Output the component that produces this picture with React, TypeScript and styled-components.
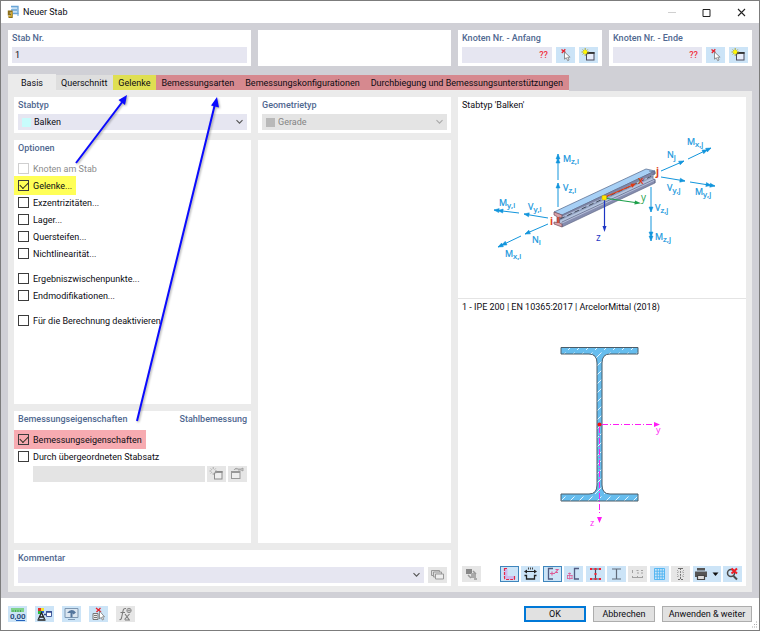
import React from "react";
import styled, { createGlobalStyle, css } from "styled-components";

const GlobalStyle = createGlobalStyle`
  * { box-sizing: border-box; }
  body { margin: 0; background: #fff; }
  body, button, input, select {
    font-family: Roboto, "Open Sans", sans-serif;
    font-size: 9px;
    line-height: 12px;
    font-weight: 400;
    color: #0c0c12;
  }
`;

const Window = styled.div`
  position: relative;
  display: flex;
  flex-direction: column;
  min-height: 100vh;
  border: 1px solid #7c7c7c;
  background: #fff;
`;

const TitleBar = styled.header`
  display: flex;
  align-items: center;
  height: 22px;
  padding-left: 6px;
`;

const Title = styled.h1`
  flex: 1;
  margin: 0 0 0 3px;
  font-size: 9px;
  font-weight: 400;
`;

const CaptionButton = styled.button`
  display: grid;
  place-items: center;
  width: 35px;
  height: 22px;
  padding: 0;
  border: 0;
  background: none;
`;

const Body = styled.main`
  flex: 1;
  display: flex;
  flex-direction: column;
  padding: 7px 7px 6px;
  background: #d0d0d6;
`;

const Panel = styled.section<{ $area?: string }>`
  padding: 2px 4px 3px;
  background: #fff;
  ${(p) => p.$area && css`grid-area: ${p.$area};`}
`;

const HeaderGrid = styled.div`
  display: grid;
  grid-template-columns: 243fr 193fr 144fr 143fr;
  gap: 7px;
  min-height: 36px;
`;

const captionStyle = css`
  display: block;
  height: 15px;
  margin: 0;
  font-size: 9px;
  font-weight: 500;
  color: #506890;
`;

const Caption = styled.label`${captionStyle}`;

const GroupTitle = styled.h2`${captionStyle}`;

const CaptionRow = styled.div`
  display: flex;
  justify-content: space-between;
`;

const FieldRow = styled.div<{ $indent?: boolean; $tight?: boolean }>`
  display: flex;
  align-items: center;
  gap: ${(p) => (p.$tight ? "2px" : "4px")};
  padding-left: ${(p) => (p.$indent ? "15px" : "0")};
`;

const TextField = styled.input<{ $alert?: boolean }>`
  flex: 1;
  min-width: 0;
  width: 100%;
  height: 16px;
  padding: 0 3px;
  border: 0;
  background: #e6e6f1;
  ${(p) => p.$alert && css`text-align: right; color: #f0353f; font-weight: 500; padding-right: 4px;`}
  &:disabled { background: #e4e4e4; }
`;

const SelectBox = styled.span<{ $muted?: boolean }>`
  display: grid;
  flex: 1;
  grid-template-columns: 4px 9px 1fr 9px 3px;
  align-items: center;
  height: 16px;
  background: ${(p) => (p.$muted ? "#e4e4e4" : "#e6e6f1")};
  svg { grid-row: 1; grid-column: 4; pointer-events: none; }
`;

const Swatch = styled.i<{ $color: string }>`
  grid-row: 1;
  grid-column: 2;
  height: 9px;
  background: ${(p) => p.$color};
`;

const Select = styled.select`
  grid-row: 1;
  grid-column: 1 / -1;
  appearance: none;
  width: 100%;
  height: 16px;
  padding: 0 14px 0 16px;
  border: 0;
  background: none;
  &:disabled { color: #838383; opacity: 1; }
`;

const IconButton = styled.button<{ $wide?: boolean; $active?: boolean }>`
  display: grid;
  place-items: center;
  flex: none;
  width: ${(p) => (p.$wide ? "28px" : "19px")};
  height: 16px;
  padding: 0;
  border: ${(p) => (p.$active ? "1px solid #3f86bd" : "0")};
  background: #cce4f7;
  &:disabled { background: #e6e6e6; }
  svg { display: block; }
`;

const Tabs = styled.nav`
  display: flex;
  align-items: flex-end;
  margin-top: 8px;
`;

const Tab = styled.button<{ $tone: string; $tall?: boolean }>`
  height: ${(p) => (p.$tall ? "17px" : "16px")};
  padding: ${(p) => (p.$tall ? "0 13px" : "0 6px 0 5px")};
  border: 0;
  border-bottom: ${(p) => (p.$tall ? "0" : "1px solid #ececec")};
  background: ${(p) => p.$tone};
  white-space: nowrap;
`;

const Page = styled.div`
  flex: 1;
  display: grid;
  grid-template-columns: 237fr 193fr 288fr;
  grid-template-rows: auto 2fr 1fr auto;
  grid-template-areas:
    "type geometry preview"
    "options empty preview"
    "design empty preview"
    "comment comment preview";
  gap: 7px;
  padding: 6px;
  background: #ebebeb;
`;

const CheckGroup = styled.div<{ $tight?: boolean }>`
  display: flex;
  flex-direction: column;
  padding-top: 3px;
  margin-bottom: ${(p) => (p.$tight ? "1px" : "5px")};
`;

const CheckRow = styled.label<{ $mark?: string; $muted?: boolean }>`
  display: flex;
  align-items: center;
  align-self: flex-start;
  gap: 4px;
  height: 19px;
  margin: -1px 0 -1px -4px;
  padding: 0 4px;
  white-space: nowrap;
  background: ${(p) => p.$mark ?? "none"};
  color: ${(p) => (p.$muted ? "#8c8c8c" : "inherit")};
`;

const CheckBox = styled.input`
  appearance: none;
  display: grid;
  place-items: center;
  width: 11px;
  height: 11px;
  margin: 0;
  border: 1px solid #3c3c3c;
  &:disabled { border-color: #cfcfcf; }
  &:checked::after {
    content: "";
    width: 7px;
    height: 4px;
    margin-bottom: 2px;
    border: solid #2c2c1c;
    border-width: 0 0 1px 1px;
    transform: rotate(-45deg);
  }
`;

const Preview = styled.section`
  grid-area: preview;
  background: #fff;
`;

const PreviewTitle = styled.h2<{ $rule?: boolean }>`
  margin: 0;
  padding: ${(p) => (p.$rule ? "2px 4px" : "2px 4px 1px")};
  font-size: 9px;
  font-weight: 400;
  border-top: ${(p) => (p.$rule ? "1px solid #e4e4e4" : "0")};
`;

const Drawing = styled.svg`
  display: block;
  width: 100%;
  font-family: "Open Sans", "Noto Sans", sans-serif;
`;

const PreviewTools = styled.div`
  display: flex;
  padding: 4px;
`;

const ToolGroup = styled.div`
  flex: 1;
  display: flex;
  justify-content: space-between;
  margin-left: 19px;
`;

const Footer = styled.footer`
  position: relative;
  display: flex;
  align-items: center;
  gap: 8px;
  height: 32px;
  padding: 0 7px;
`;

const Actions = styled.div`
  display: flex;
  gap: 7px;
  margin-left: auto;
`;

const ActionButton = styled.button<{ $primary?: boolean; $wide?: boolean }>`
  width: ${(p) => (p.$wide ? "90px" : "62px")};
  height: 16px;
  padding: 0;
  white-space: nowrap;
  line-height: 12px;
  border: ${(p) => (p.$primary ? "2px solid #0078d7" : "1px solid #adadad")};
  background: #e1e1e1;
`;

const Grip = styled.svg`
  position: absolute;
  right: 1px;
  bottom: 1px;
`;

const Annotations = styled.svg`
  position: absolute;
  left: -1px;
  top: -1px;
  pointer-events: none;
  filter: drop-shadow(1px 1px 1px rgba(0, 0, 0, 0.35));
`;

const Chevron = ({ color = "#555" }: { color?: string }) => (
  <svg width="9" height="6" viewBox="0 0 9 6">
    <path d="M1.5 1.2 4.5 4.2 7.5 1.2" fill="none" stroke={color} strokeWidth="1.1" />
  </svg>
);

const PickIcon = () => (
  <svg width="17" height="15" viewBox="0 0 17 15">
    <path d="M4.500 1.500l4 3M8.300 1.200 4.800 5" stroke="#e8202c" strokeWidth="1.300" />
    <path d="M7.500 4v7.200l1.800-1.500 1.400 3 1.400-.7-1.400-2.800h2.400z" fill="#fff" stroke="#777" strokeWidth=".8" />
  </svg>
);

const NewIcon = ({ gray }: { gray?: boolean }) => (
  <svg width="19" height="16" viewBox="0 0 19 16">
    <rect x="7.5" y="5.5" width="7.5" height="7.5" fill={gray ? "#eee" : "#e8eefc"} stroke={gray ? "#8c8c8c" : "#4a4a5c"} />
    <path d="M7 6h8.500" stroke={gray ? "#8c8c8c" : "#333"} strokeWidth="1.8" />
    <path d="M6.200 1v8M2.500 5h7.500M3.700 2.500l5 5M8.700 2.500l-5 5" stroke={gray ? "#a2a2a2" : "#a8a21c"} strokeWidth=".9" />
    <circle cx="6.200" cy="5" r="2" fill={gray ? "#e6e6e6" : "#fff700"} />
  </svg>
);

const EditIcon = () => (
  <svg width="19" height="16" viewBox="0 0 19 16">
    <rect x="3.500" y="5.500" width="8.500" height="7" fill="#eee" stroke="#999" />
    <path d="M3 6h9" stroke="#999" strokeWidth="2" />
    <path d="M6 4c1-2 3-2 4-1h3l2-1v3l-2-1h-3" fill="#ccc" stroke="#999" strokeWidth=".8" />
  </svg>
);

const AppIcon = () => (
  <svg width="13" height="14" viewBox="0 0 13 14">
    <path d="M4 1.500h7v7H6M4 5h6" fill="#c8e2f6" stroke="#6aa5d6" strokeWidth="1.300" />
    <path d="M11 8v3" stroke="#6aa5d6" />
    <path d="M4.700 6.500H1.800v3h3zM4.700 6v6H1.500" fill="none" stroke="#8a6d18" strokeWidth="2" />
    <path d="M4.500 7v4.500H1.500" fill="none" stroke="#e6b92c" strokeWidth=".8" />
  </svg>
);

const ForceArrow = ({ x1, y1, x2, y2, twin }: { x1: number; y1: number; x2: number; y2: number; twin?: boolean }) => {
  const angle = (Math.atan2(y2 - y1, x2 - x1) * 180) / Math.PI;
  return (
    <g stroke="#1295dc" fill="#1295dc">
      <path d={`M${x1} ${y1}L${x2} ${y2}`} />
      <path d={`M0 0l-5-2v4z${twin ? "M-4 0l-5-2v4z" : ""}`} transform={`translate(${x2} ${y2}) rotate(${angle})`} strokeWidth=".5" />
    </g>
  );
};

const forces = [
  [558, 180, 558, 154, 1], [558, 207, 558, 183, 0], [548, 218, 524, 214, 0], [519, 213, 494, 210, 1],
  [548, 224, 525, 234, 0], [521, 236, 498, 247, 1], [661, 171, 684, 161, 0], [688, 159, 711, 148, 1],
  [661, 177, 685, 181, 0], [690, 182, 715, 186, 1], [651, 187, 651, 212, 0], [651, 216, 651, 241, 1],
];

const forceLabels: [string, string, number, number][] = [
  ["M", "z,i", 563, 162], ["V", "z,i", 563, 191], ["M", "y,i", 499, 206], ["V", "y,i", 528, 210],
  ["N", "i", 532, 243], ["M", "x,i", 505, 257], ["M", "x,j", 687, 145], ["N", "j", 667, 158],
  ["V", "y,j", 667, 191], ["M", "y,j", 695, 195], ["V", "z,j", 655, 211], ["M", "z,j", 655, 240],
];

const BeamDrawing = () => (
  <Drawing viewBox="458 112 288 186">
    <path d="M554 212 646 169 655 171 562 215z" fill="#a7d0f5" stroke="#5f7396" strokeWidth=".8" />
    <path d="M562 215 655 171v3L562 218z" fill="#8087a8" stroke="#58607f" strokeWidth=".5" />
    <path d="M559 218 653 175v6L559 224z" fill="#b5c5de" />
    <path d="M559 219 653 176v1.500L559 221z" fill="#8f9dbd" />
    <path d="M562 222 655 179v4L562 227z" fill="#858daf" stroke="#58607f" strokeWidth=".6" />
    <path d="M562 223 655 180" stroke="#c3cde4" strokeWidth=".8" />
    <path d="M554 212l8 3v3l-2.500-1v6l2.500 1v3l-8-3v-2l3 .5v-6l-3-1.500z" fill="#d9a1a8" stroke="#704c59" strokeWidth=".7" />
    <path d="M649 171l6 1v2l-2 0v5l2 1v3" fill="none" stroke="#66708f" strokeWidth=".8" />
    <path d="M560 219 652 176" stroke="#444c5c" strokeDasharray="5 3" />
    <path d="M558 217v6" stroke="#c83720" strokeWidth="1.500" />
    <path d="M604 197.500 633 185" stroke="#e03a12" strokeWidth="1.200" />
    <path d="M636 183.500l-5.500.2 1.700 4z" fill="#e03a12" />
    <path d="M604 198 635 202.500" stroke="#1da04a" strokeWidth="1.100" />
    <path d="M641 203.300l-6-2.800-.6 4z" fill="#1da04a" />
    <path d="M604.500 198v29" stroke="#1c35c4" strokeWidth="1.200" />
    <path d="M604.500 232l-2-6h4z" fill="#1c35c4" />
    <rect x="602" y="195.500" width="4.500" height="4.500" rx="1" fill="#ffe600" stroke="#c7a800" strokeWidth=".5" />
    {forces.map(([x1, y1, x2, y2, twin]) => (
      <ForceArrow key={`${x1}-${y1}`} x1={x1} y1={y1} x2={x2} y2={y2} twin={!!twin} />
    ))}
    {forceLabels.map(([name, sub, x, y]) => (
      <text key={`${x}-${y}`} x={x} y={y} fontSize="9" fill="#1295dc" stroke="#1295dc" strokeWidth=".2">
        {name}
        <tspan fontSize="8" dy="2">{sub}</tspan>
      </text>
    ))}
    <g fontSize="10">
      <text x="550" y="225" fill="#dd4015" fontWeight="700">i</text>
      <text x="656" y="175" fill="#dd4015" fontWeight="700">j</text>
      <text x="638" y="184" fill="#dd4015" fontWeight="600">x</text>
      <text x="641" y="201" fill="#1da04a">y</text>
      <text x="596" y="241" fill="#1c35c4">z</text>
    </g>
  </Drawing>
);

const SectionDrawing = () => (
  <Drawing viewBox="458 315 288 247">
    <defs>
      <pattern id="hatch" width="9" height="9" patternUnits="userSpaceOnUse">
        <rect width="9" height="9" fill="#66bdee" />
        <path d="M1 8 7.500 1.500" stroke="#e6f6ff" strokeWidth="1" />
      </pattern>
    </defs>
    <path
      d="M561 347.500h77v6.500h-28q-8 0-8 9v122q0 9 8 9h28v7h-77v-7h28q8 0 8-9V363q0-9-8-9h-28z"
      fill="url(#hatch)"
      stroke="#4b5c68"
    />
    <g stroke="#ff1cf5" fill="#ff1cf5">
      <path d="M602 424.500h51" strokeDasharray="6 2 1 2" />
      <path d="M599.500 427v88" strokeDasharray="6 2 1 2" />
      <path d="M660 424.500l-6-2.500v5zM599.500 523l-2.500-6h5z" stroke="none" />
    </g>
    <circle cx="599.500" cy="424.500" r="2" fill="#f51010" />
    <g fontSize="9" fill="#ff1cf5">
      <text x="656" y="433">y</text>
      <text x="590" y="526">z</text>
    </g>
  </Drawing>
);

const icon = (children: React.ReactNode, width = 17) => (
  <svg width={width} height="14" viewBox={`0 0 ${width} 14`} fill="none">{children}</svg>
);

const tools: { name: string; active?: boolean; disabled?: boolean; wide?: boolean; art: React.ReactNode }[] = [
  { name: "Querschnittskontur", active: true, art: icon(<>
    <path d="M5 1.500v7q0 2 2 2h6" stroke="#cdb9ee" strokeWidth="3" />
    <path d="M3.500 1v9.500q0 2 2 2H14M3 1.500h4M13.500 9v4" stroke="#e52a48" strokeWidth="1.200" strokeDasharray="3 1" /></>) },
  { name: "Bemaßung", art: icon(<>
    <path d="M3 4.500h11" stroke="#222" />
    <path d="M2 4.500l3-2v4zM15 4.500l-3-2v4z" fill="#222" />
    <path d="M2.500 8.500h2V12h8V8.500h2" stroke="#222" strokeWidth="1.300" />
    <path d="M6 1.500h1M8 1.500h1M10 1.500h1" stroke="#444" strokeWidth="2" /></>) },
  { name: "Hauptachsen", active: true, art: icon(<>
    <path d="M9 1.500H4.500v10.500H9" stroke="#525a80" strokeWidth="1.300" />
    <path d="M6 6.500h5M8 4.500v4M11.500 2.500h2.500l-2.500 3h2.500" stroke="#dc5b96" strokeWidth="1.100" /></>) },
  { name: "Punkte", art: icon(<>
    <path d="M14 1.500H9.500v10.500H14" stroke="#525a80" strokeWidth="1.300" />
    <path d="M3 6.500h3M2 8.500h5.500M2 11.500h5.500M2.500 8v4M7 8v4M4.700 5.500v7" stroke="#dc5b96" strokeWidth=".8" /></>) },
  { name: "Profil mit Punkten", art: icon(<>
    <path d="M3 2h11M3 12h11M8.500 2v10" stroke="#444c60" strokeWidth="1.200" />
    <path d="M3 2h2M7.500 2h2M12 2h2M3 12h2M7.500 12h2M12 12h2M7.500 7h2" stroke="#f02032" strokeWidth="1.800" /></>) },
  { name: "Profil", art: icon(<path d="M4 2h9M4 12h9M8.500 2v10" stroke="#606b7a" strokeWidth="1.200" />) },
  { name: "Nummerierung", disabled: true, art: icon(<>
    <path d="M3.500 3v3M7.500 3.500h2M8 6h2M12 3.500h2M12 6h2" stroke="#a0a0a0" />
    <path d="M3 10.500h11M3.500 9v2M8.500 9v2M13.500 9v2" stroke="#a0a0a0" /></>) },
  { name: "Raster", art: icon(<path d="M3.500 1.500h10v11h-10zM6.200 1.500v11M8.700 1.500v11M11.200 1.500v11M3.500 4.200h10M3.500 7h10M3.500 9.800h10" stroke="#4bb3f2" strokeWidth=".9" />) },
  { name: "Teilung", disabled: true, art: icon(<>
    <path d="M6 1.500h5M6 12.500h5M8.500 1v12" stroke="#6f6f6f" strokeDasharray="2 1" />
    <path d="M5.500 3v8M11.500 3v8M6 5h5M6 9h5" stroke="#aaa" strokeDasharray="1 1" /></>) },
  { name: "Drucken", wide: true, art: icon(<>
    <path d="M4 1h8v2.500H4z" fill="#555" />
    <path d="M2 4.500h12v5.500H2z" fill="#555" />
    <path d="M4.500 8.500h7v4h-7z" fill="#ddd" stroke="#444" strokeWidth="1.200" />
    <path d="M19.500 5.500h6l-3 3.500z" fill="#111" /></>, 27) },
  { name: "Ansicht zurücksetzen", art: icon(<>
    <circle cx="7" cy="6" r="3.500" stroke="#4b4b4b" strokeWidth="1.500" />
    <path d="M9.500 9l3.500 3.500" stroke="#4b4b4b" strokeWidth="2" />
    <path d="M7.500 1.500l5.500 5M13 1.500l-5.500 5" stroke="#ee1c24" strokeWidth="2" /></>) },
];

const footerTools: { name: string; disabled?: boolean; art: React.ReactNode }[] = [
  { name: "Einheiten", art: icon(<>
    <path d="M2 1h13v4H2z" fill="#7fd28b" />
    <path d="M4 3v2M6.500 3v2M9 3v2M11.500 3v2" stroke="#4ba65b" />
    <text x="1" y="12" fontSize="8" fontWeight="600" fill="#1e4473">0,00</text>
    <path d="M7 13.500h9" stroke="#2463bd" /></>) },
  { name: "Anzeige", art: icon(<>
    <path d="M2 1h3v3H2z" fill="#e12f2f" /><path d="M5 1h3v3H5z" fill="#f4e32d" /><path d="M2 4h3v3H2z" fill="#2dbb42" /><path d="M5 4h3v2H5z" fill="#2d66d0" />
    <path d="M2.500 12 5.500 5.500 8.500 12M4 10h3M1.500 13h8" stroke="#222" strokeWidth="1.300" />
    <path d="M10.500 4.500h5v5h-5z" fill="#fff" stroke="#445c9c" /><path d="M10 5h6M8 7.500h2" stroke="#334a8c" strokeWidth="1.500" /></>) },
  { name: "Ansicht", art: icon(<>
    <path d="M2 1.500h13v9H2z" fill="#dbe6f0" stroke="#7d97b2" />
    <path d="M4 6q4.500-5.500 9-.5l-2.500 2-1-1.200v4h-2V6z" fill="#54769d" />
    <path d="M5 12.500h7" stroke="#7d97b2" /></>) },
  { name: "Auswählen", art: icon(<>
    <path d="M6 1l5 4M10.500 1 6.500 5" stroke="#e8202c" strokeWidth="1.300" />
    <path d="M3 6.500h5v6H3zM4 8.500h3M4 10.500h3" fill="#eee" stroke="#777" />
    <path d="M9.500 4v8l1.700-1.700 1.200 2.700 1.300-.7-1.200-2.500h2z" fill="#fff" stroke="#777" strokeWidth=".8" /></>) },
  { name: "Formel", disabled: true, art: icon(<>
    <path d="M9 1.500Q6.500 1 6 4L4.500 11q-.5 2-2 1.500M3.500 5.500H8M8 7l4 5.500M12.500 7l-5 5.500M8 13h5" stroke="#7b7b7b" strokeWidth="1.100" />
    <circle cx="12" cy="3.500" r="2.200" stroke="#8b8b8b" /><path d="M10 3.500h4M12 1.500v4" stroke="#8b8b8b" strokeWidth=".7" /></>) },
];

const groups = [
  ["Knoten am Stab", "Gelenke...", "Exzentrizitäten...", "Lager...", "Quersteifen...", "Nichtlinearität..."],
  ["Ergebniszwischenpunkte...", "Endmodifikationen..."],
  ["Für die Berechnung deaktivieren"],
];

const NodeField = ({ id, label }: { id: string; label: string }) => (
  <Panel>
    <Caption htmlFor={id}>{label}</Caption>
    <FieldRow>
      <TextField id={id} $alert defaultValue="??" />
      <IconButton aria-label="Knoten wählen"><PickIcon /></IconButton>
      <IconButton aria-label="Neuer Knoten"><NewIcon /></IconButton>
    </FieldRow>
  </Panel>
);

export default function App() {
  return (
    <Window>
      <GlobalStyle />
      <TitleBar>
        <AppIcon />
        <Title>Neuer Stab</Title>
        <CaptionButton aria-label="Minimieren">
          <svg width="9" height="9"><path d="M1 4.500h8" stroke="#d0d0d0" /></svg>
        </CaptionButton>
        <CaptionButton aria-label="Maximieren">
          <svg width="9" height="9"><path d="M1 1.500h7v7H1z" fill="none" stroke="#222" /></svg>
        </CaptionButton>
        <CaptionButton aria-label="Schließen">
          <svg width="9" height="9"><path d="M1 1l7 7M8 1 1 8" stroke="#222" strokeWidth="1.100" /></svg>
        </CaptionButton>
      </TitleBar>

      <Body>
        <HeaderGrid>
          <Panel>
            <Caption htmlFor="number">Stab Nr.</Caption>
            <FieldRow><TextField id="number" defaultValue="1" /></FieldRow>
          </Panel>
          <Panel />
          <NodeField id="start" label="Knoten Nr. - Anfang" />
          <NodeField id="end" label="Knoten Nr. - Ende" />
        </HeaderGrid>

        <Tabs>
          <Tab $tone="#ebebeb" $tall>Basis</Tab>
          <Tab $tone="#dedede">Querschnitt</Tab>
          <Tab $tone="#dfdf52">Gelenke</Tab>
          <Tab $tone="#d6898f">Bemessungsarten</Tab>
          <Tab $tone="#d6898f">Bemessungskonfigurationen</Tab>
          <Tab $tone="#d6898f">Durchbiegung und Bemessungsunterstützungen</Tab>
        </Tabs>

        <Page>
          <Panel $area="type">
            <Caption htmlFor="type">Stabtyp</Caption>
            <SelectBox>
              <Swatch $color="#c8fcfc" />
              <Select id="type"><option>Balken</option></Select>
              <Chevron />
            </SelectBox>
          </Panel>
          <Panel $area="geometry">
            <Caption htmlFor="geometry">Geometrietyp</Caption>
            <SelectBox $muted>
              <Swatch $color="#b9b9b9" />
              <Select id="geometry" disabled><option>Gerade</option></Select>
              <Chevron color="#aaa" />
            </SelectBox>
          </Panel>
          <Panel $area="options">
            <GroupTitle>Optionen</GroupTitle>
            {groups.map((group) => (
              <CheckGroup key={group[0]}>
                {group.map((text) => (
                  <CheckRow key={text} $mark={text === "Gelenke..." ? "#ffff57" : undefined} $muted={text === "Knoten am Stab"}>
                    <CheckBox type="checkbox" defaultChecked={text === "Gelenke..."} disabled={text === "Knoten am Stab"} />
                    {text}
                  </CheckRow>
                ))}
              </CheckGroup>
            ))}
          </Panel>
          <Panel $area="empty" />
          <Panel $area="design">
            <CaptionRow>
              <GroupTitle>Bemessungseigenschaften</GroupTitle>
              <GroupTitle>Stahlbemessung</GroupTitle>
            </CaptionRow>
            <CheckGroup $tight>
              <CheckRow $mark="#f7abb1"><CheckBox type="checkbox" defaultChecked />Bemessungseigenschaften</CheckRow>
              <CheckRow><CheckBox type="checkbox" />Durch übergeordneten Stabsatz</CheckRow>
            </CheckGroup>
            <FieldRow $indent $tight>
              <TextField aria-label="Stabsatz" disabled />
              <IconButton disabled aria-label="Neuer Stabsatz"><NewIcon gray /></IconButton>
              <IconButton disabled aria-label="Stabsatz bearbeiten"><EditIcon /></IconButton>
            </FieldRow>
          </Panel>
          <Panel $area="comment">
            <Caption htmlFor="comment">Kommentar</Caption>
            <FieldRow>
              <SelectBox>
                <Select id="comment"><option></option></Select>
                <Chevron />
              </SelectBox>
              <IconButton disabled aria-label="Kommentare">
                {icon(<>
                  <path d="M2.500 2.500h8v5h-8z" fill="#ddd" stroke="#999" />
                  <path d="M4.500 4h8v5h-8z" fill="#ddd" stroke="#999" />
                  <path d="M6.500 6h8v5h-8z" fill="#eee" stroke="#999" />
                </>)}
              </IconButton>
            </FieldRow>
          </Panel>

          <Preview>
            <PreviewTitle>Stabtyp 'Balken'</PreviewTitle>
            <BeamDrawing />
            <PreviewTitle $rule>1 - IPE 200 | EN 10365:2017 | ArcelorMittal (2018)</PreviewTitle>
            <SectionDrawing />
            <PreviewTools>
              <IconButton disabled aria-label="Information">
                {icon(<>
                  <path d="M3 2h6v5H3z" fill="#888" /><path d="M8 6h5v5H8z" fill="#aaa" />
                  <path d="M5 8l3 3M10 4l3 3M11 12h3" stroke="#999" strokeWidth="1.500" />
                </>)}
              </IconButton>
              <ToolGroup>
                {tools.map((t) => (
                  <IconButton key={t.name} aria-label={t.name} $active={t.active} $wide={t.wide} disabled={t.disabled}>{t.art}</IconButton>
                ))}
              </ToolGroup>
            </PreviewTools>
          </Preview>
        </Page>
      </Body>

      <Footer>
        {footerTools.map((t) => (
          <IconButton key={t.name} aria-label={t.name} disabled={t.disabled}>{t.art}</IconButton>
        ))}
        <Actions>
          <ActionButton $primary>OK</ActionButton>
          <ActionButton>Abbrechen</ActionButton>
          <ActionButton $wide>Anwenden &amp; weiter</ActionButton>
        </Actions>
        <Grip width="8" height="8">
          <path d="M6 1h1M4 3.500h1M6 3.500h1M2 6h1M4 6h1M6 6h1" stroke="#aaa" strokeWidth="1.200" />
        </Grip>
      </Footer>

      <Annotations width="260" height="430">
        <path d="M76 163 123 101M137 421 215 104" stroke="#0a0aff" strokeWidth="2" />
        <path d="M127 95l-2 10-6.500-5zM217 97l2 10.500-8-2z" fill="#0a0aff" />
      </Annotations>
    </Window>
  );
}
